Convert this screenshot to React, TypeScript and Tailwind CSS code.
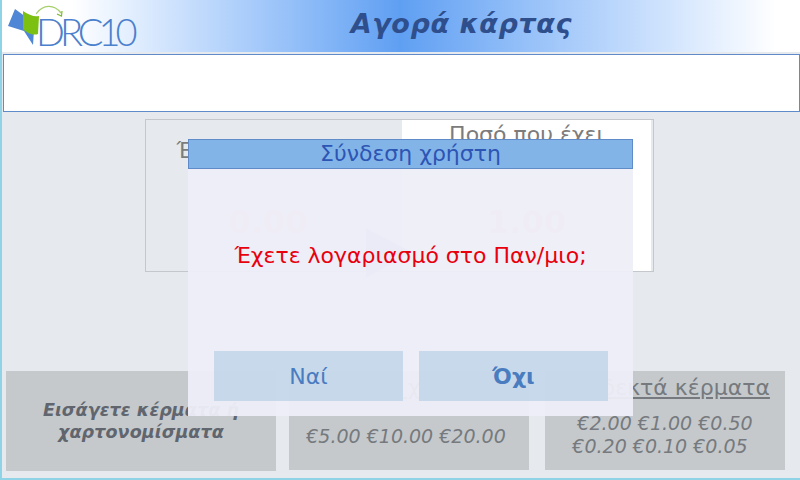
import React from "react";

const Logo: React.FC = () => {
  return (
    <div className="flex items-start w-[140px] h-[50px] relative">
      <svg width="44" height="46" viewBox="0 0 44 46" className="absolute left-[6px] top-[3px]">
        <path d="M9 5 L2 22 L18 27 L27 41 L28 26 L24 16 Z" fill="#4f86d6" />
        <path d="M17 7 C23 11 28 13 33 12 L32 30 C26 32 20 28 17 25 Z" fill="#7cc012" />
      </svg>
      <svg width="30" height="20" viewBox="0 0 30 20" className="absolute left-[36px] top-[3px]">
        <path d="M0 10 C7 0 18 0 25 9" fill="none" stroke="#a6cf6a" strokeWidth="1.3" />
        <path d="M21 10 L25.5 12 L26 7" fill="none" stroke="#7fb53a" strokeWidth="1.2" />
      </svg>
      <span className="absolute left-[36px] top-[8px] font-['Lato'] font-light text-[38px] leading-[44px] tracking-[-5px] text-[#4a80cc]">
        DRC10
      </span>
    </div>
  );
};

const App: React.FC = () => {
  return (
    <div className="relative w-[800px] h-[480px] overflow-hidden bg-[#e6eaee] font-['DejaVu_Sans',sans-serif] border-l-2 border-b-2 border-[#8fd3e6]">
      {/* Header */}
      <div className="h-[52px] -ml-[2px] flex items-center justify-between bg-gradient-to-r from-white from-[9%] via-[#5f9ff2] via-[50%] to-white to-[97%]">
        <Logo />
        <h1 className="mr-[228px] mb-[4px] text-[27px] font-bold italic tracking-[0.6px] text-[#2f4e8c]">
          Αγορά κάρτας
        </h1>
      </div>

      {/* Message box */}
      <div className="mt-[2px] ml-[1px] h-[58px] bg-white border border-[#5f8cc8]"></div>

      {/* Amounts */}
      <div className="mt-[7px] ml-[143px] w-[509px] h-[153px] flex border border-[#c4c8cc] text-[22px] text-[#7c7c7c] text-center">
        <div className="relative w-[256px] pt-[18px] pr-[16px] leading-[26px]">
          <p>Έχετε πληρώσει</p>
          <p className="absolute left-0 right-[12px] top-[86px] text-[32px] leading-[32px] font-bold text-[#f4bcbc]">0.00</p>
        </div>
        <div className="relative flex-1 bg-white pt-[4px] mr-[2px] leading-[22px]">
          <p>Ποσό που έχει</p>
          <p>πληρωθεί</p>
          <p className="absolute inset-x-0 top-[86px] text-[32px] leading-[32px] font-bold text-[#f4bcbc]">1.00</p>
        </div>
        <svg width="50" height="60" viewBox="0 0 50 60" className="absolute left-[362px] top-[226px]">
          <path d="M2 2 L48 26 L2 52 Z" fill="#94b6ea" />
        </svg>
      </div>

      {/* Accepted money */}
      <div className="mt-[99px] ml-[4px] flex items-start text-[#767a7e]">
        <div className="w-[270px] h-[100px] bg-[#c5c9cc] flex items-center justify-center text-center">
          <p className="text-[17.5px] leading-[22px] font-bold italic tracking-[0.1px] text-[#60656e]">
            Εισάγετε κέρματα ή
            <br />
            χαρτονομίσματα
          </p>
        </div>
        <div className="ml-[13px] w-[240px] h-[99px] bg-[#c5c9cc] text-center overflow-hidden">
          <p className="mt-[4px] pl-[4px] text-left text-[22px] leading-[26px] whitespace-nowrap underline">Αποδεκτά χαρτονομίσματα</p>
          <p className="mt-[23px] pr-[6px] text-[19px] leading-[24px] italic">€5.00 €10.00 €20.00</p>
        </div>
        <div className="ml-[16px] w-[240px] h-[99px] bg-[#c5c9cc] text-center">
          <p className="mt-[4px] text-[22px] leading-[26px] underline">Αποδεκτά κέρματα</p>
          <p className="mt-[11px] text-[19px] leading-[23px] italic">
            €2.00 €1.00 €0.50
            <br />
            <span className="-ml-[10px]">€0.20 €0.10 €0.05</span>
          </p>
        </div>
      </div>

      {/* Login dialog */}
      <div className="absolute left-[186px] top-[139px] w-[445px] h-[277px] bg-[#eeeef8]/95 flex flex-col">
        <div className="h-[30px] bg-[#82b4e8] border border-[#5f8cc8] text-center text-[22px] leading-[28px] text-[#2d55b4]">
          Σύνδεση χρήστη
        </div>
        <p className="mt-[72px] text-center text-[22px] leading-[30px] text-[#e8000c]">
          Έχετε λογαριασμό στο Παν/μιο;
        </p>
        <div className="mt-[80px] ml-[26px] flex gap-[16px]">
          <button className="w-[189px] h-[50px] bg-[#c3d6ea]/90 text-[22px] text-[#4a7cc0]">Ναί</button>
          <button className="w-[189px] h-[50px] bg-[#c3d6ea]/90 text-[22px] font-bold text-[#4a7cc0]">Όχι</button>
        </div>
      </div>
    </div>
  );
};

export default App;
